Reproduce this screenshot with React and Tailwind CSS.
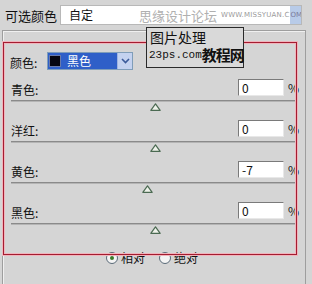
import React from 'react';

const rows = [
    { label: '青色:', value: '0', thumb: 155 },
    { label: '洋红:', value: '0', thumb: 155 },
    { label: '黄色:', value: '-7', thumb: 147 },
    { label: '黑色:', value: '0', thumb: 155 },
];

const Thumb = () => (
    <svg width="11" height="8" viewBox="0 0 11 8">
        <path d="M5.5 0.8 L10.2 7.3 L0.8 7.3 Z" fill="#eef2ea" stroke="#4b6a52" strokeWidth="1.2" strokeLinejoin="round" />
    </svg>
);

const SliderRow = ({ label, value, thumb }) => (
    <div className="h-[41px] flex flex-col">
        <div className="flex items-end h-[17px] pl-[8px]">
            <span className="w-[227px] text-[12px] leading-none pb-[1px] -mb-[1px] whitespace-nowrap">{label}</span>
            <div className="w-[46px] h-[17px] bg-white border border-t-[#7a7a7a] border-l-[#7a7a7a] border-r-[#e8e8e8] border-b-[#e8e8e8] flex items-center pl-[3px] text-[12px] leading-none">
                {value}
            </div>
            <span className="ml-[4px] text-[12px] leading-none pb-[2px]">%</span>
        </div>
        <div className="mt-[4px] ml-[8px] w-[287px] h-[2px] bg-[#8a8a8a] border-b border-b-[#b4b4b4]" />
        <div className="h-[9px] mt-[1px]" style={{ marginLeft: thumb - 3 - 5 }}>
            <Thumb />
        </div>
    </div>
);

const Radio = ({ checked, label }) => (
    <div className="flex items-center gap-[3px]">
        <div className="w-[12px] h-[12px] rounded-full border border-[#5a6a78] bg-[#f4f4f4] flex items-center justify-center">
            {checked && <div className="w-[4px] h-[4px] rounded-full bg-[#3a7a2a]" />}
        </div>
        <span className="text-[12px] leading-none whitespace-nowrap">{label}</span>
    </div>
);

export default function App() {
    return (
        <div className="w-[312px] h-[284px] bg-[#d5d5d5] relative overflow-hidden text-[#111]" style={{ fontFamily: '"Noto Sans CJK SC", "DejaVu Sans", sans-serif' }}>
            {/* top preset row */}
            <div className="h-[30px] flex items-start pt-[5px]">
                <span className="ml-[5px] w-[55px] shrink-0 mt-[4px] text-[13px] leading-none whitespace-nowrap">可选颜色</span>
                <div className="w-[242px] shrink-0 h-[20px] bg-white border border-[#b8b8b8] flex items-center whitespace-nowrap overflow-hidden">
                    <span className="ml-[8px] text-[12px] leading-none shrink-0">自定</span>
                    <span className="ml-[46px] text-[13px] leading-none text-[#b0b0b0] shrink-0">思缘设计论坛</span>
                    <span className="ml-[4px] text-[7px] leading-none text-[#9a9a9a] shrink-0 tracking-[0.2px]" style={{ fontFamily: '"DejaVu Sans", sans-serif' }}>WWW.MISSYUAN.C</span>
                    <span className="h-full bg-[#b8cbe8] flex items-center pl-[1px] pr-[3px] text-[7px] leading-none text-[#7a7a9a] shrink-0" style={{ fontFamily: '"DejaVu Sans", sans-serif' }}>OM</span>
                </div>
            </div>

            {/* group box */}
            <div className="ml-[2px] w-[304px] h-[260px] border border-[#9e9e9e] border-b-0 shadow-[inset_1px_1px_0_#f0f0f0]">
                <div className="mt-[21px] flex items-center h-[18px]">
                    <span className="ml-[7px] w-[37px] text-[12px] leading-none mt-[3px] whitespace-nowrap">颜色:</span>
                    <div className="w-[86px] h-[18px] flex border border-[#7f9db9] bg-[#2f5fc8]">
                        <div className="w-[12px] h-[12px] bg-[#060610] border border-[#6a7aa8] mt-[2px] ml-[1px]" />
                        <span className="ml-[6px] text-white text-[12px] leading-[16px] whitespace-nowrap">黑色</span>
                        <div className="ml-auto w-[15px] h-full bg-[#c4d2f0] border-l border-[#9fb4e0] flex items-center justify-center">
                            <svg width="9" height="6" viewBox="0 0 9 6">
                                <path d="M1 1 L4.5 4.5 L8 1" fill="none" stroke="#3b5a9a" strokeWidth="1.6" />
                            </svg>
                        </div>
                    </div>
                </div>

                <div className="mt-[9px]">
                    {rows.map((r) => (
                        <SliderRow key={r.label} {...r} />
                    ))}
                </div>

                <div className="mt-[9px] flex justify-center gap-[14px] pr-[4px]">
                    <Radio checked label="相对" />
                    <Radio label="绝对" />
                </div>
            </div>

            {/* red annotation rectangle */}
            <div className="absolute left-[3px] top-[42px] w-[294px] h-[213px] border border-[#a41c30] shadow-[0_0_0_1px_#f0b4bc,inset_0_0_0_1px_#f0b4bc] pointer-events-none" />

            {/* watermark box */}
            <div className="absolute left-[146px] top-[27px] w-[98px] h-[41px] bg-[#d9d9d9] border border-[#2a2a2a] pointer-events-none whitespace-nowrap">
                <div className="ml-[3px] mt-[2px] h-[14px] text-[14px] leading-none">图片处理</div>
                <div className="flex items-end h-[18px]">
                    <span className="ml-[2px] text-[11px] leading-none mb-[1px]" style={{ fontFamily: '"Liberation Mono", monospace' }}>23ps.com</span>
                    <span className="text-[15px] leading-none font-bold tracking-[-1px]">教程网</span>
                </div>
            </div>
        </div>
    );
}
